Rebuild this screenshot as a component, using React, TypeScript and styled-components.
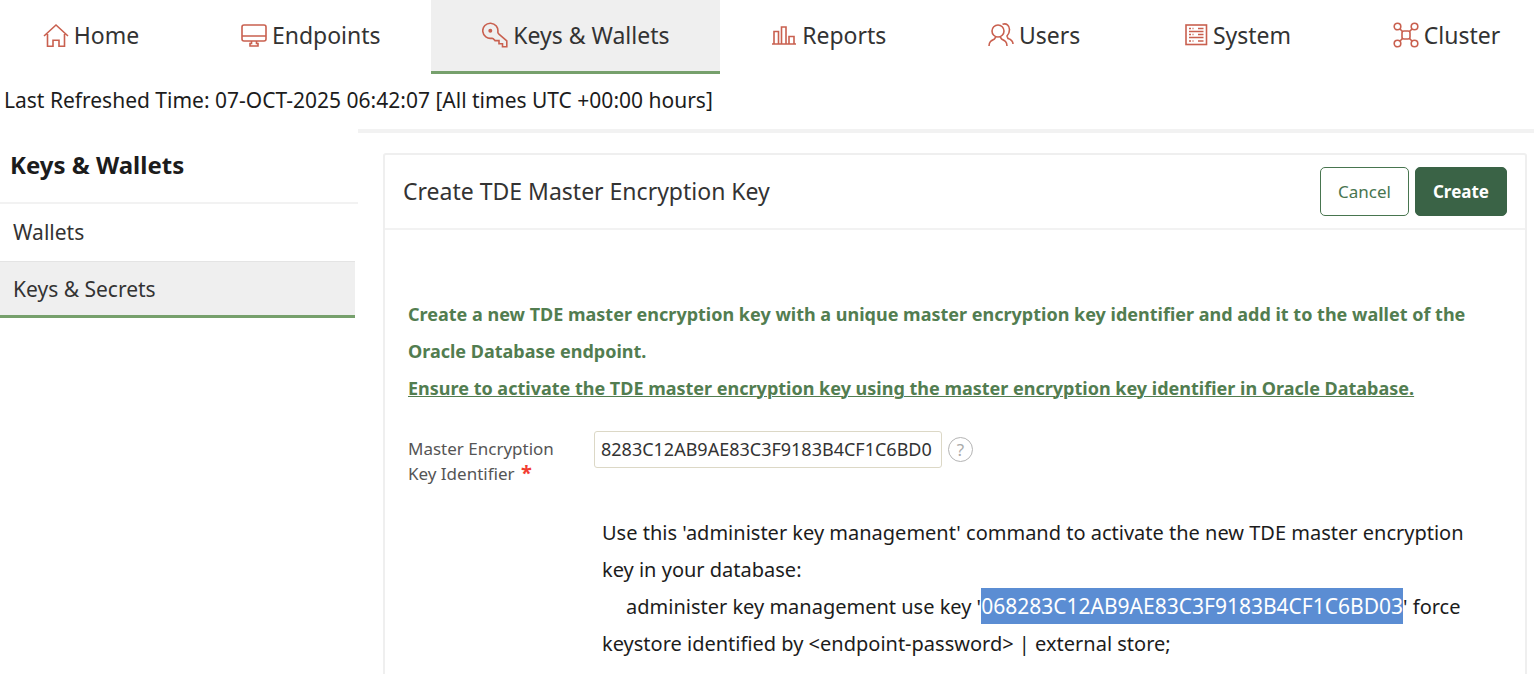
import React from "react";
import styled, { createGlobalStyle, css } from "styled-components";

const GlobalStyle = createGlobalStyle`
  *, *::before, *::after { box-sizing: border-box; }
  body {
    margin: 0;
    background: #fff;
    color: #1c1c1c;
    font-family: "Noto Sans", "Open Sans", sans-serif;
    font-size: 21px;
    overflow-x: hidden;
  }
`;

const Nav = styled.nav`
  display: flex;
  margin: 0 -17px 0 -8px;
`;

const NavLink = styled.a<{ $active?: boolean }>`
  flex: 1 0 auto;
  display: flex;
  align-items: center;
  justify-content: center;
  gap: 5px;
  height: 74px;
  padding-bottom: 2px;
  border-bottom: 3px solid transparent;
  color: #333;
  font-size: 23px;
  line-height: 32px;
  text-decoration: none;
  white-space: nowrap;
  ${(p) => p.$active && css`
    background: #efefef;
    border-bottom-color: #76a06c;
  `}
`;

const Icon = styled.svg`
  flex: none;
  width: 26px;
  height: 26px;
  fill: none;
  stroke: #c9604f;
  stroke-width: 1.6;
`;

const Refreshed = styled.p`
  margin: 0;
  padding: 12px 4px 15px;
  line-height: 28px;
`;

const Columns = styled.div`
  display: flex;
  align-items: flex-start;
`;

const Sidebar = styled.aside`
  flex: none;
  width: 358px;
`;

const SideTitle = styled.h2`
  margin: 0;
  padding: 20px 10px 21px;
  border-bottom: 2px solid #f2f2f2;
  font-size: 24px;
  line-height: 32px;
`;

const SideList = styled.ul`
  margin: 0;
  padding: 0 3px 0 0;
  list-style: none;
`;

const SideLink = styled.a<{ $active?: boolean }>`
  display: block;
  padding: 14px 13px 12px;
  color: #333;
  line-height: 28px;
  text-decoration: none;
  border-bottom: 3px solid transparent;
  ${(p) => p.$active && css`
    background: #efefef;
    border-bottom-color: #76a06c;
    box-shadow: inset 0 1px #e4e4e4;
  `}
`;

const Main = styled.main`
  flex: 1;
  min-width: 0;
  padding: 20px 7px 0 25px;
  border-top: 4px solid #f2f2f2;
`;

const Panel = styled.section`
  border: 2px solid #efefef;
  border-radius: 3px;
`;

const PanelHeader = styled.header`
  display: flex;
  align-items: center;
  gap: 6px;
  padding: 12px 18px;
  border-bottom: 2px solid #f2f2f2;
`;

const PanelTitle = styled.h1`
  flex: 1;
  margin: 0;
  padding-bottom: 2px;
  color: #333;
  font-size: 23px;
  font-weight: 400;
  line-height: 30px;
`;

const Button = styled.button<{ $primary?: boolean }>`
  height: 49px;
  padding: 0 17px 1px;
  border: 1px solid #48754f;
  border-radius: 5px;
  background: #fff;
  color: #48754f;
  font: 400 17px "Noto Sans", sans-serif;
  ${(p) => p.$primary && css`
    border-color: #3a6346;
    background: #3a6346;
    color: #fff;
    font-weight: 700;
  `}
`;

const PanelBody = styled.div`
  padding: 66px 48px 40px 23px;
`;

const Notice = styled.p`
  margin: 0;
  color: #527d50;
  font-size: 18px;
  font-weight: 700;
  line-height: 37px;
`;

const Underlined = styled.span`
  display: block;
  text-decoration: underline;
  text-decoration-thickness: 1px;
`;

const Field = styled.div`
  display: flex;
  align-items: flex-start;
  margin-top: 24px;
`;

const Label = styled.label`
  width: 186px;
  padding: 5px 30px 0 0;
  color: #555;
  font-size: 17px;
  line-height: 25px;
`;

const Required = styled.span`
  margin-left: 2px;
  color: #f23c32;
  font-size: 20px;
  font-weight: 700;
  line-height: 20px;
`;

const TextInput = styled.input`
  width: 348px;
  height: 37px;
  padding: 0 6px 2px;
  border: 1px solid #dcd8c6;
  border-radius: 3px;
  background: #fff;
  color: #333;
  font: 400 18px "Noto Sans", sans-serif;
`;

const HelpButton = styled.button`
  width: 25px;
  height: 25px;
  margin: 6px 0 0 6px;
  padding: 0;
  border: 1px solid #b4b4b4;
  border-radius: 50%;
  background: #fff;
  color: #aaa;
  font: 400 17px/22px "Noto Sans", sans-serif;
`;

const Instructions = styled.p`
  margin: 28px 0 0;
  padding-left: 194px;
  font-size: 20px;
  line-height: 37px;
`;

const Command = styled.span`
  display: block;
  &::before {
    content: "";
    display: inline-block;
    width: 24px;
  }
`;

const Selected = styled.span`
  padding: 4px 0;
  background: #5b8dd3;
  color: #fff;
  font-size: 21px;
`;

const icons = {
  home: (
    <path d="M1 14 13 3l12 11M4.500 12v12.200h5.500v-6h6v6h5.500V12" />
  ),
  endpoints: (
    <>
      <rect x="1" y="3" width="24" height="16" rx="2" />
      <path d="M1 14h24M10.500 19v2.500H9V24h8v-2.500h-1.500V19" />
    </>
  ),
  keys: (
    <>
      <path d="M10 16.200A7.600 7.600 0 1 1 15.800 10.200c.2 1 .7 1.600 1.400 2.200l7.600 6.400v6h-4.300v-3H17v-3.200h-4c-.9-1-1.600-2.200-3-2.400z" />
      <circle cx="8.300" cy="8.800" r="1.200" fill="#c9604f" />
    </>
  ),
  reports: (
    <path d="M1 22h24M3 22V9.500h4.500V22M10.500 22V5H15v17M18 22v-7.500h5V22" />
  ),
  users: (
    <>
      <circle cx="10" cy="9" r="6" />
      <path d="M1 24c0-4.500 2.500-5.500 5.500-7l1.500-2.500M12 14.500l1.500 2.500c3 1.500 5.500 2.500 5.500 7M14.500 2.300c4-1.500 7 1.200 7 5.200 0 3-1 5-2.500 6.500l1 2.500c3 1 5 2 5 5.500" />
    </>
  ),
  system: (
    <>
      <rect x="4" y="3" width="20.500" height="19.500" />
      <path d="M7 9.500h14.500M7 15.500h14.500M7 6.500h2M10.500 6.500h1M16 6.500h5.500M7 12.500h2M10.500 12.500h1M16 12.500h5.500M7 19h2M10.500 19h1M16 19h5.500" />
    </>
  ),
  cluster: (
    <>
      <circle cx="4.500" cy="4.500" r="3.300" />
      <circle cx="21.500" cy="4.500" r="3.300" />
      <circle cx="4.500" cy="21.500" r="3.300" />
      <circle cx="21.500" cy="21.500" r="3.300" />
      <rect x="9" y="9" width="8" height="8" rx="2" />
      <path d="m7 7 2.500 2.500M19 7l-2.500 2.500M7 19l2.500-2.500M19 19l-2.500-2.500" />
    </>
  ),
};

const navItems: { label: string; icon: keyof typeof icons; active?: boolean }[] = [
  { label: "Home", icon: "home" },
  { label: "Endpoints", icon: "endpoints" },
  { label: "Keys & Wallets", icon: "keys", active: true },
  { label: "Reports", icon: "reports" },
  { label: "Users", icon: "users" },
  { label: "System", icon: "system" },
  { label: "Cluster", icon: "cluster" },
];

export default function App() {
  return (
    <>
      <GlobalStyle />
      <Nav>
        {navItems.map((item) => (
          <NavLink key={item.label} href="#" $active={item.active}>
            <Icon viewBox="0 0 26 26" aria-hidden="true">{icons[item.icon]}</Icon>
            {item.label}
          </NavLink>
        ))}
      </Nav>
      <Refreshed>Last Refreshed Time: 07-OCT-2025 06:42:07 [All times UTC +00:00 hours]</Refreshed>
      <Columns>
        <Sidebar>
          <SideTitle>Keys &amp; Wallets</SideTitle>
          <SideList>
            <li><SideLink href="#">Wallets</SideLink></li>
            <li><SideLink href="#" $active>Keys &amp; Secrets</SideLink></li>
          </SideList>
        </Sidebar>
        <Main>
          <Panel>
            <PanelHeader>
              <PanelTitle>Create TDE Master Encryption Key</PanelTitle>
              <Button type="button">Cancel</Button>
              <Button type="button" $primary>Create</Button>
            </PanelHeader>
            <PanelBody>
              <Notice>
                Create a new TDE master encryption key with a unique master encryption key identifier and add it to the wallet of the Oracle Database endpoint.
                <Underlined>Ensure to activate the TDE master encryption key using the master encryption key identifier in Oracle Database.</Underlined>
              </Notice>
              <Field>
                <Label htmlFor="key-id">Master Encryption Key Identifier <Required>*</Required></Label>
                <TextInput id="key-id" defaultValue="8283C12AB9AE83C3F9183B4CF1C6BD0" />
                <HelpButton type="button" aria-label="Help">?</HelpButton>
              </Field>
              <Instructions>
                Use this 'administer key management' command to activate the new TDE master encryption key in your database:
                <Command>
                  administer key management use key '<Selected>068283C12AB9AE83C3F9183B4CF1C6BD03</Selected>' force keystore identified by &lt;endpoint-password&gt; | external store;
                </Command>
              </Instructions>
            </PanelBody>
          </Panel>
        </Main>
      </Columns>
    </>
  );
}
